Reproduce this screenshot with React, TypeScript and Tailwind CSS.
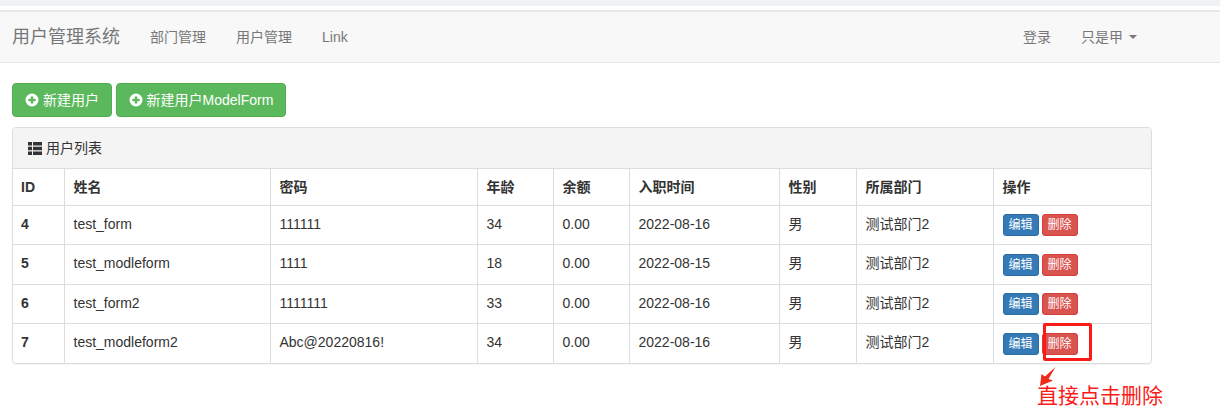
const FONT = "font-['Liberation_Sans','Noto_Sans_CJK_SC',sans-serif]";

const users = [
  { id: 4, name: 'test_form', pwd: '111111', age: 34, balance: '0.00', date: '2022-08-16', sex: '男', dept: '测试部门2', h: 'h-[39px]', tall: false },
  { id: 5, name: 'test_modleform', pwd: '1111', age: 18, balance: '0.00', date: '2022-08-15', sex: '男', dept: '测试部门2', h: 'h-[40px]', tall: true },
  { id: 6, name: 'test_form2', pwd: '1111111', age: 33, balance: '0.00', date: '2022-08-16', sex: '男', dept: '测试部门2', h: 'h-[39px]', tall: false },
  { id: 7, name: 'test_modleform2', pwd: 'Abc@20220816!', age: 34, balance: '0.00', date: '2022-08-16', sex: '男', dept: '测试部门2', h: 'h-[40px]', tall: true },
];

const headers = ['ID', '姓名', '密码', '年龄', '余额', '入职时间', '性别', '所属部门', '操作'];

function PlusIcon() {
  return (
    <svg width="14" height="14" viewBox="0 0 14 14" className="shrink-0">
      <circle cx="7" cy="7" r="6.5" fill="#fff" />
      <path d="M5.8 3.5h2.4v2.3h2.3v2.4H8.2v2.3H5.8V8.2H3.5V5.8h2.3z" fill="#5cb85c" />
    </svg>
  );
}

function ListIcon() {
  return (
    <svg width="14" height="13" viewBox="0 0 14 13" className="shrink-0">
      <path d="M0 0h4v3.6H0zM5 0h9v3.6H5zM0 4.7h4v3.6H0zM5 4.7h9v3.6H5zM0 9.4h4V13H0zM5 9.4h9V13H5z" fill="#333" />
    </svg>
  );
}

export default function App() {
  return (
    <div className={`relative h-[417px] w-[1220px] overflow-hidden bg-white text-[14px] text-[#333] ${FONT}`}>
      <div className="h-[6px] bg-[#f0f1f3]" />
      <nav className="mt-[4px] flex h-[53px] items-center border-y border-t-2 border-[#e7e7e7] bg-[#f8f8f8] pl-[12px] pr-[83px] text-[#777]">
        <span className="mr-[30px] text-[18px]">用户管理系统</span>
        <div className="flex gap-[30px]">
          <span>部门管理</span>
          <span>用户管理</span>
          <span>Link</span>
        </div>
        <div className="ml-auto flex items-center gap-[30px]">
          <span>登录</span>
          <span className="flex items-center gap-[6px]">
            只是甲
            <span className="h-0 w-0 border-x-[4px] border-t-[4px] border-x-transparent border-t-[#777]" />
          </span>
        </div>
      </nav>

      <div className="pl-[12px] pt-[20px]">
        <div className="flex gap-[4px] text-white">
          <button className="flex h-[34px] w-[100px] items-center justify-center gap-[4px] rounded-[4px] border border-[#4cae4c] bg-[#5cb85c]">
            <PlusIcon />
            新建用户
          </button>
          <button className="flex h-[34px] w-[170px] items-center justify-center gap-[4px] rounded-[4px] border border-[#4cae4c] bg-[#5cb85c]">
            <PlusIcon />
            新建用户ModelForm
          </button>
        </div>

        <div className="mt-[10px] w-[1140px] overflow-hidden rounded-[4px] border border-[#ddd] shadow-[0_1px_1px_rgba(0,0,0,0.05)]">
          <div className="flex h-[41px] items-center gap-[4px] border-b border-[#ddd] bg-[#f4f4f4] pl-[15px]">
            <ListIcon />
            用户列表
          </div>
          <table className="w-[1138px] table-fixed border-collapse">
            <colgroup>
              <col className="w-[51px]" />
              <col className="w-[206px]" />
              <col className="w-[207px]" />
              <col className="w-[76px]" />
              <col className="w-[76px]" />
              <col className="w-[150px]" />
              <col className="w-[77px]" />
              <col className="w-[137px]" />
              <col />
            </colgroup>
            <thead>
              <tr className="h-[36px]">
                {headers.map((h) => (
                  <th key={h} className="border-b border-l border-[#ddd] pl-[9px] pt-[1px] text-left font-bold first:border-l-0 first:pl-[8px]">
                    {h}
                  </th>
                ))}
              </tr>
            </thead>
            <tbody>
              {users.map((u, i) => (
                <tr key={u.id} className={u.h}>
                  <td className={`pl-[8px] font-bold ${i > 0 ? 'border-t border-[#ddd]' : ''} ${u.tall ? 'pb-[1px]' : ''}`}>{u.id}</td>
                  {[u.name, u.pwd, u.age, u.balance, u.date, u.sex, u.dept].map((v, j) => (
                    <td key={j} className={`border-l border-[#ddd] pl-[9px] ${i > 0 ? 'border-t' : ''} ${u.tall ? 'pb-[1px]' : ''}`}>
                      {v}
                    </td>
                  ))}
                  <td className={`border-l border-[#ddd] pl-[9px] ${i > 0 ? 'border-t' : ''} ${u.tall ? 'pt-[1px]' : ''}`}>
                    <div className="flex gap-[3px] text-[12px] text-white">
                      <button className="h-[22px] w-[36px] rounded-[3px] border border-[#2e6da4] bg-[#337ab7]">编辑</button>
                      <button className="h-[22px] w-[36px] rounded-[3px] border border-[#d43f3a] bg-[#d9534f]">删除</button>
                    </div>
                  </td>
                </tr>
              ))}
            </tbody>
          </table>
        </div>
      </div>

      {/* 标注 */}
      <div className="absolute left-[1043px] top-[323px] h-[38px] w-[49px] rounded-[2px] border-[3px] border-[#fb1a16]" />
      <svg className="absolute left-[1038px] top-[366px]" width="20" height="20" viewBox="0 0 20 20">
        <path d="M17.5 1 L10.5 13 L15 14.5 L2 20 L3.5 8 L7 10.5 Z" fill="#f02a1a" />
      </svg>
      <span className="absolute left-[1037px] top-[382px] text-[21px] leading-[28px] text-[#fb1a16]">直接点击删除</span>
    </div>
  );
}
